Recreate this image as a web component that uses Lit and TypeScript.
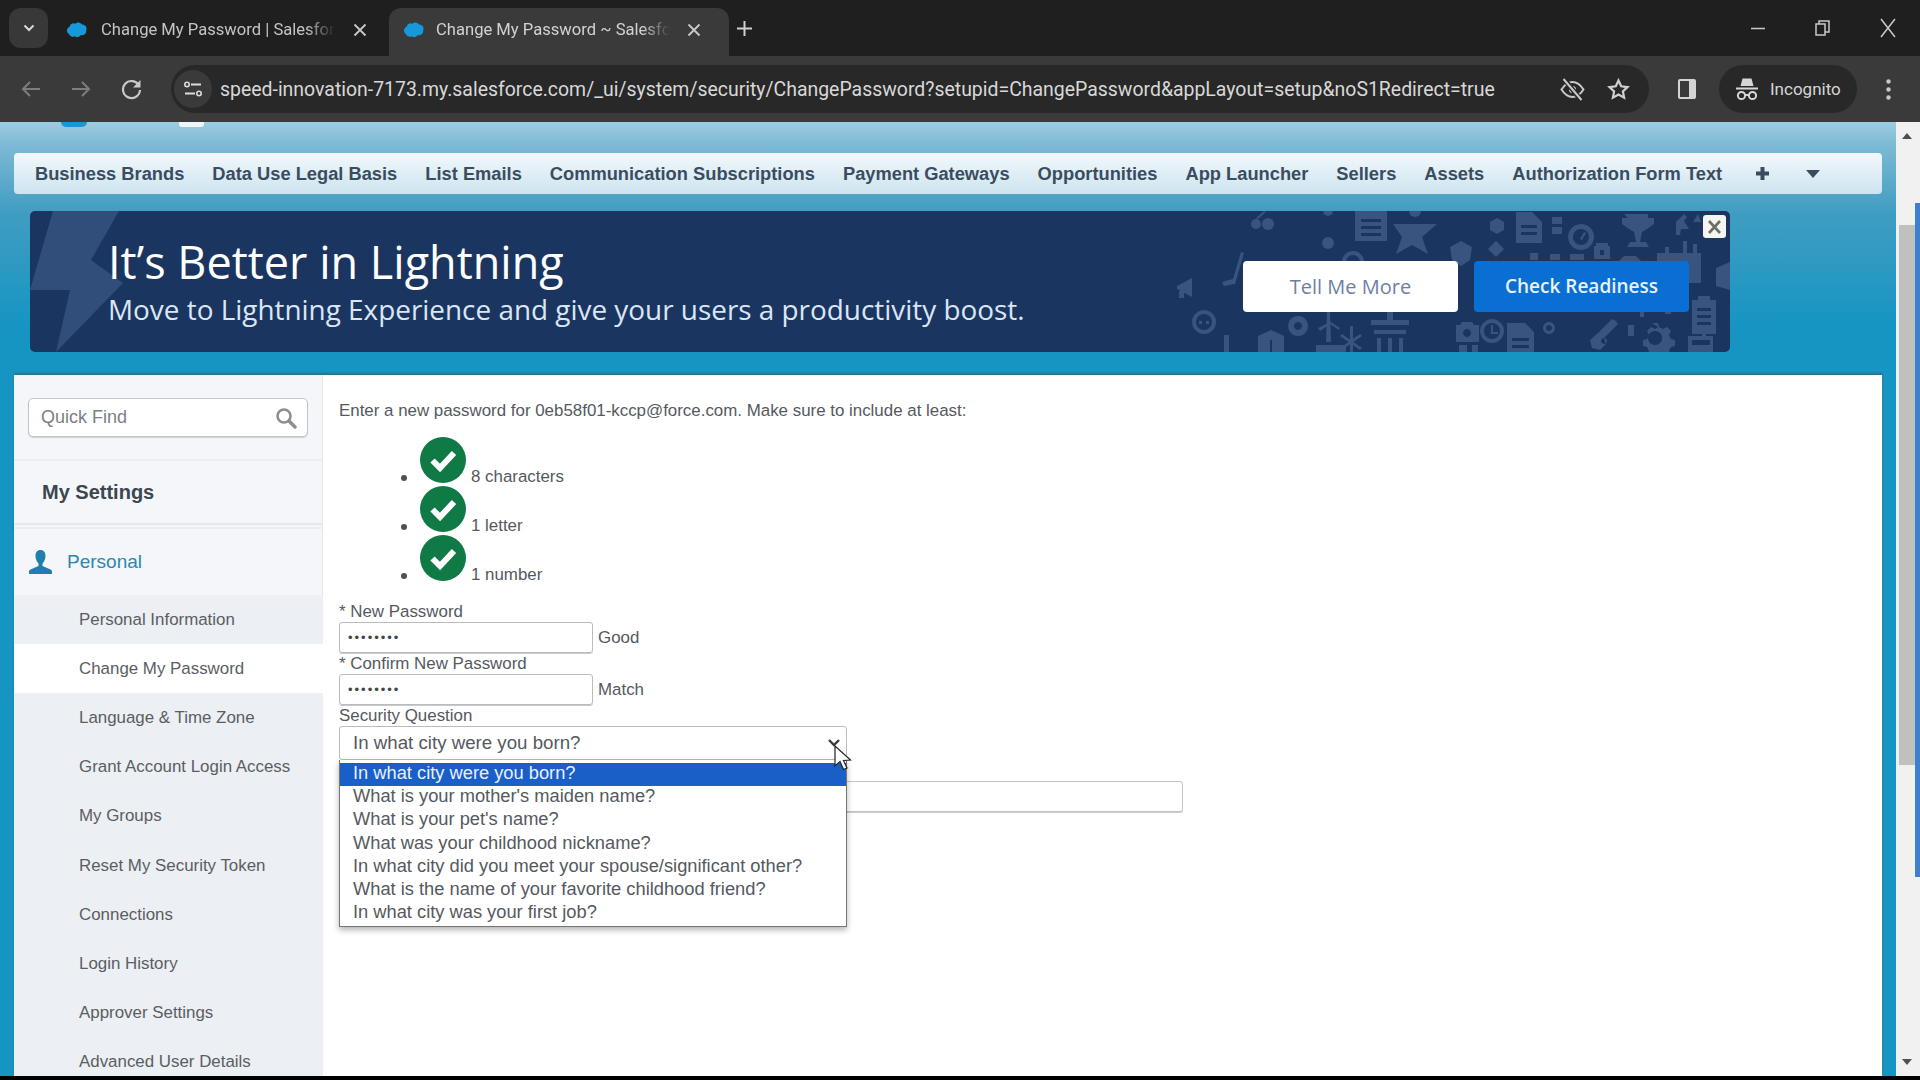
import { LitElement, html, css, svg } from 'lit';
import { customElement } from 'lit/decorators.js';

const navItems = [
  'Business Brands',
  'Data Use Legal Basis',
  'List Emails',
  'Communication Subscriptions',
  'Payment Gateways',
  'Opportunities',
  'App Launcher',
  'Sellers',
  'Assets',
  'Authorization Form Text',
];

const sideItems = [
  'Personal Information',
  'Change My Password',
  'Language & Time Zone',
  'Grant Account Login Access',
  'My Groups',
  'Reset My Security Token',
  'Connections',
  'Login History',
  'Approver Settings',
  'Advanced User Details',
];

const questions = [
  'In what city were you born?',
  "What is your mother's maiden name?",
  "What is your pet's name?",
  'What was your childhood nickname?',
  'In what city did you meet your spouse/significant other?',
  'What is the name of your favorite childhood friend?',
  'In what city was your first job?',
];

const rules = ['8 characters', '1 letter', '1 number'];

const cloud = html`<svg class="favicon" viewBox="0 0 24 20">
  <path fill="#1798d8" d="M10 2.500a5 5 0 0 1 8 1 5 5 0 0 1 5 7 5 5 0 0 1-6.500 5.500 4.500 4.500 0 0 1-7 1.500A5 5 0 0 1 2.500 15 5 5 0 0 1 3 6a5 5 0 0 1 7-3.500z" />
</svg>`;

// faint icon wallpaper on the right of the banner, drawn in page coordinates
const wallpaper = svg`
  <g fill="#3a5480" stroke="none">
    <circle cx="1256" cy="224" r="5" /><circle cx="1268" cy="224" r="6" /><path d="M1256 218l8-7 2 1-8 7z" />
    <path fill-rule="evenodd" d="M1355 211h32v30h-32zM1361 219v3h20v-3zM1361 226v3h20v-3zM1361 233v3h20v-3z" />
    <path d="M1393 224h44l-15 13 6 17-16-9-16 9 6-17z" />
    <circle cx="1328" cy="243" r="6" /><path d="M1342 262a11 11 0 0 1 22 0h-4a7 7 0 0 0-14 0z" />
    <circle cx="1328" cy="211" r="5" /><circle cx="1415" cy="211" r="6" />
    <path d="M1222 283l3-2 8-2 8-27 3 1-9 31-11 2z" />
    <path d="M1177 286l15-8v19l-15-8zM1179 291h5v7h-5z" />
    <path fill-rule="evenodd" d="M1204 310a12 12 0 1 0 .1 0zM1204 314a8 8 0 1 1-.1 0zM1199 321h3v3h-3zM1206 321h3v3h-3z" />
    <path fill-rule="evenodd" d="M1298 316a10 10 0 1 0 .1 0zM1298 322a4 4 0 1 1-.1 0z" />
    <path d="M1327 312h3l1 30h-5zM1318 328l10-5 1 2-9 6zM1331 322l9 6-1 2-9-6z" />
    <path d="M1350 326h3v26h-3zM1340 336l2-2 20 14-2 2zM1340 348l20-14 2 2-20 14z" />
    <path d="M1387 312h6v10h-6zM1371 320h38v5h-38zM1374 330h32v4h-32zM1377 338h4v14h-4zM1388 338h4v14h-4zM1399 338h4v14h-4z" />
    <path d="M1271 330l13 6v16h-26v-16zM1270 340v12h2v-12z" />
    <path d="M1224 335h5v17h-5z" />
    <path d="M1316 345h30v7h-30z" />
    <path fill-rule="evenodd" d="M1516 212h16l10 10v21h-26zM1521 225v3h16v-3zM1521 232v3h16v-3z" />
    <path fill-rule="evenodd" d="M1581 224a13 13 0 1 0 .1 0zM1581 229a8 8 0 1 1-.1 0z" />
    <path d="M1584 232l2 1-4 7-2-1z" />
    <path d="M1624 214h24v4h6v6l-7 5-5 3-2 10h6l3 5h-22l3-5h6l-2-10-5-3-7-5v-6h6z" />
    <path d="M1676 222l8-8 3 3-3 4 5 8h-8l-1 6h-4zM1693 222l5-8 3 8z" />
    <path fill-rule="evenodd" d="M1596 243h12v3h2v13h-16v-13h2zM1600 250v5h4v-5z" />
    <path d="M1461 241l11 6-2 13-9 6-9-6-2-13z" />
    <path d="M1496 241l8 8-8 8-8-8z" />
    <path d="M1497 218l7 4v8l-7 4-7-4v-8z" />
    <path d="M1552 217h10v7h-10zM1552 227h10v7h-10z" />
    <path d="M1530 253h8v7h-8zM1550 254h10v6h-10zM1570 254h14v6h-14z" />
    <path d="M1624 256h12l6 6h-24z" />
    <path d="M1657 253h8v-6h4v6h14v-12h4v12h6v-9h4v9h4v30h-44z" />
    <path d="M1716 268l14-6v28l-14-4z" />
    <path fill-rule="evenodd" d="M1692 300h6v-4h12v4h6v34h-24zM1697 308v3h14v-3zM1697 315v3h14v-3zM1697 322v3h14v-3z" />
    <path fill-rule="evenodd" d="M1456 325h4l2-3h10l2 3h5v17h-23zM1467 329a4 4 0 1 0 .1 0z" />
    <path d="M1459 345h8v7h-8zM1472 345h6v7h-6z" />
    <path fill-rule="evenodd" d="M1492 319a12 12 0 1 0 .1 0zM1492 323a8 8 0 1 1-.1 0zM1491 325h2v7h5v2h-7z" />
    <path fill-rule="evenodd" d="M1507 323h18l9 9v20h-27zM1512 338v3h17v-3zM1512 345v3h17v-3z" />
    <path fill-rule="evenodd" d="M1549 322a6 6 0 1 0 .1 0zM1549 325a3 3 0 1 1-.1 0z" />
    <path fill-rule="evenodd" d="M1598 333l14-14 4 2 2 3-14 14 2 6-6 6-8-2-2-8zM1604 338a3 3 0 1 0 .1 0z" />
    <path d="M1628 325h6v11h-6z" />
    <path fill-rule="evenodd" d="M1652 323h6l1 4 4 2 4-2 4 4-2 4 2 4 4 1v6l-4 1-2 4 2 3h-24l2-3-2-4-4-1v-6l4-1 2-4-2-4 4-4 4 2 3-2zM1655 331a7 7 0 1 0 .1 0z" />
    <path fill-rule="evenodd" d="M1688 336h14v-3h4v3h7v16h-25zM1692 340v5h18v-5z" />
    <path d="M1665 309h6v5h-6zM1640 312h4v5h-4z" />
  </g>
`;

@customElement('app-root')
export class AppRoot extends LitElement {
  static styles = css`
    :host {
      display: block;
      width: 1920px;
      height: 1080px;
      overflow: hidden;
      background: #000;
      font-family: 'Liberation Sans', Arial, sans-serif;
      color: #55595e;
    }

    /* browser chrome */
    .tabstrip {
      height: 56px;
      display: flex;
      background: #1f1f1f;
      color: #c4c4c4;
      font-family: Roboto, 'Liberation Sans', sans-serif;
      font-size: 16.600px;
    }
    .tab-menu {
      width: 39px;
      height: 40px;
      margin: 8px 0 0 9px;
      border-radius: 12px;
      background: #383838;
      display: flex;
      align-items: center;
      justify-content: center;
    }
    .tab {
      width: 340px;
      height: 48px;
      margin-top: 8px;
      box-sizing: border-box;
      padding-bottom: 5px;
      display: flex;
      align-items: center;
      border-radius: 12px 12px 0 0;
    }
    .tab.first {
      margin-left: 1px;
      padding-left: 18px;
    }
    .tab.active {
      background: #3a3a3a;
      padding-left: 15px;
      color: #d2d2d2;
    }
    .favicon {
      width: 20px;
      height: 18px;
      flex: none;
    }
    .tab-title {
      width: 234px;
      margin-left: 14px;
      white-space: nowrap;
      -webkit-mask-image: linear-gradient(90deg, #000 88%, transparent);
      mask-image: linear-gradient(90deg, #000 88%, transparent);
    }
    .tab.active .tab-title {
      margin-left: 12px;
    }
    .tab-close {
      margin-left: 17px;
      width: 16px;
      height: 16px;
    }
    .tab.active .tab-close {
      margin-left: 16px;
    }
    .new-tab {
      width: 30px;
      height: 40px;
      margin-top: 8px;
      display: flex;
      align-items: center;
      justify-content: center;
    }
    .window-controls {
      margin-left: auto;
      display: flex;
    }
    .window-controls span {
      width: 65px;
      height: 56px;
      display: flex;
      align-items: center;
      justify-content: center;
    }
    .toolbar {
      height: 66px;
      box-sizing: border-box;
      padding-left: 6px;
      display: flex;
      align-items: center;
      background: #3a3a3a;
      color: #c9c9c9;
      font-family: Roboto, 'Liberation Sans', sans-serif;
    }
    .tool {
      width: 50px;
      height: 48px;
      display: flex;
      align-items: center;
      justify-content: center;
      flex: none;
    }
    .address {
      width: 1478px;
      height: 48px;
      margin-left: 15px;
      box-sizing: border-box;
      border-radius: 24px;
      background: #282828;
      display: flex;
      align-items: center;
      padding-left: 3px;
      flex: none;
    }
    .site-info {
      width: 38px;
      height: 38px;
      border-radius: 50%;
      background: #3a3a3a;
      display: flex;
      align-items: center;
      justify-content: center;
      flex: none;
    }
    .url {
      margin-left: 8px;
      flex: 1;
      font-size: 19.450px;
      color: #d8d8d8;
      white-space: nowrap;
    }
    .addr-icon {
      width: 46px;
      height: 48px;
      display: flex;
      align-items: center;
      justify-content: center;
    }
    .address .addr-icon:last-child {
      margin-right: 8px;
    }
    .side-panel {
      margin-left: 13px;
    }
    .incognito {
      width: 138px;
      height: 48px;
      margin-left: 7px;
      border-radius: 24px;
      background: #282828;
      display: flex;
      align-items: center;
      box-sizing: border-box;
      padding-left: 16px;
      gap: 11px;
      font-size: 17px;
      color: #d6d6d6;
      flex: none;
    }
    .kebab {
      width: 63px;
    }

    /* salesforce page */
    .page {
      height: 954px;
      display: flex;
    }
    .content {
      width: 1896px;
      box-sizing: border-box;
      background: linear-gradient(#9ccce1 0, #7cb9d5 24px, #3f9cc1 92px, #3a9cc2 110px, #1795c2 200px);
    }
    .logo-peek {
      height: 6px;
      position: relative;
    }
    .logo-peek i {
      position: absolute;
      top: 0;
    }
    .peek-cloud {
      left: 61px;
      width: 26px;
      height: 5px;
      border-radius: 0 0 13px 13px;
      background: #1798d0;
    }
    .peek-white {
      left: 179px;
      width: 25px;
      height: 5px;
      border-radius: 0 0 3px 3px;
      background: #eef5f8;
    }
    .nav {
      height: 41px;
      margin: 25px 14px 0;
      box-sizing: border-box;
      padding-left: 21px;
      display: flex;
      align-items: center;
      gap: 28px;
      border-radius: 4px;
      background: linear-gradient(#f2f8fb, #cde4f0);
      font-size: 18.300px;
      font-weight: 700;
      color: #3a4d60;
      white-space: nowrap;
    }
    .nav-plus {
      margin-left: 5px;
      width: 15px;
      height: 15px;
    }
    .nav-caret {
      margin-left: 8px;
      width: 14px;
      height: 8px;
    }
    .banner {
      position: relative;
      height: 141px;
      width: 1700px;
      margin: 17px 0 0 30px;
      box-sizing: border-box;
      border-radius: 5px;
      overflow: hidden;
      background: #1a3560;
      display: flex;
      align-items: flex-start;
      color: #fff;
      font-family: 'Open Sans', sans-serif;
    }
    .bolt {
      position: absolute;
      left: 0;
      top: 0;
      width: 100px;
      height: 141px;
    }
    .wallpaper {
      position: absolute;
      right: 0;
      top: 0;
      width: 600px;
      height: 141px;
      filter: blur(0.6px);
    }
    .banner-copy {
      position: relative;
      margin-left: 78px;
      padding-top: 22px;
      flex: 1;
    }
    .banner-title {
      font-size: 45px;
      line-height: 58px;
      font-weight: 400;
    }
    .banner-sub {
      font-size: 27.900px;
      line-height: 36px;
      color: #dbe6f4;
    }
    .banner-actions {
      position: relative;
      display: flex;
      gap: 16px;
      margin: 50px 41px 0 0;
    }
    .banner-btn {
      width: 215px;
      height: 51px;
      box-sizing: border-box;
      padding-bottom: 1px;
      border-radius: 4px;
      display: flex;
      align-items: center;
      justify-content: center;
      font-size: 20px;
    }
    .banner-btn.light {
      background: #fff;
      color: #6d7fa3;
    }
    .banner-btn.primary {
      background: #0a6fd3;
      color: #e8f2ff;
      font-size: 19px;
      font-weight: 600;
    }
    .banner-close {
      position: absolute;
      right: 4px;
      top: 4px;
      width: 23px;
      height: 23px;
      border-radius: 3px;
      background: #f4f4f0;
      display: flex;
      align-items: center;
      justify-content: center;
    }
    .panel {
      height: 701px;
      margin: 23px 14px 0;
      display: flex;
      overflow: hidden;
      background: #fff;
      box-shadow: 0 -2px 2px rgba(60, 70, 80, 0.45);
    }

    /* left tree */
    .sidebar {
      width: 309px;
      flex: none;
      background: #f4f6f9;
      box-shadow: inset -1px 0 0 #e6e8eb;
    }
    .quick-find {
      height: 39px;
      margin: 23px 15px 0 14px;
      box-sizing: border-box;
      padding: 0 10px 0 12px;
      border: 1px solid #c3c6ca;
      border-radius: 5px;
      box-shadow: 0 1px 1px #d0d2d5;
      background: #fff;
      display: flex;
      align-items: center;
      justify-content: space-between;
      font-size: 18px;
      color: #7b7f84;
    }
    .side-title {
      margin-top: 22px;
      height: 66px;
      box-sizing: border-box;
      padding-left: 28px;
      border-top: 2px solid #ebedf0;
      border-bottom: 2px solid #e6e8eb;
      display: flex;
      align-items: center;
      font-size: 20px;
      font-weight: 700;
      color: #3c4650;
    }
    .side-group {
      height: 68px;
      box-sizing: border-box;
      border-top: 2px solid #ebedf0;
      margin-top: 2px;
      padding: 0 0 0 15px;
      display: flex;
      align-items: center;
      gap: 15px;
      font-size: 19px;
      color: #2e87ae;
    }
    .side-group svg {
      width: 23px;
      height: 24px;
    }
    .side-item {
      height: 49.200px;
      display: flex;
      align-items: center;
      padding-left: 65px;
      background: #eceff3;
      font-size: 16.900px;
      color: #5a5e63;
      white-space: nowrap;
    }
    .side-item.current {
      background: #fff;
    }

    /* password form */
    .form {
      flex: 1;
      padding: 27px 0 0 16px;
      position: relative;
      font-size: 16.900px;
      line-height: 18px;
    }
    .intro {
      white-space: nowrap;
    }
    .rules {
      margin-top: 17px;
    }
    .rule {
      height: 49px;
      display: flex;
      align-items: flex-end;
      padding-left: 62px;
    }
    .rule-dot {
      width: 6px;
      height: 6px;
      margin: 0 16px 5px 0;
      border-radius: 50%;
      background: #4d5156;
      flex: none;
    }
    .rule-check {
      width: 46px;
      height: 46px;
      margin: 0 5px 3px -3px;
      align-self: flex-start;
      flex: none;
    }
    .field-label {
      margin-top: 2px;
    }
    .field-label.top {
      margin-top: 19px;
    }
    .field-row {
      margin-top: 1px;
      display: flex;
      align-items: center;
      gap: 5px;
    }
    .text-box {
      width: 254px;
      height: 31px;
      box-sizing: border-box;
      padding-left: 8px;
      border: 1px solid #b8bbbf;
      border-radius: 3px;
      box-shadow: 0 1px 0 #c8cacc;
      display: flex;
      align-items: center;
      font-size: 13px;
      letter-spacing: 2px;
      color: #444;
    }
    .select {
      width: 508px;
      height: 34px;
      margin-top: 1px;
      box-sizing: border-box;
      padding: 0 6px 0 13px;
      border: 1px solid #b8bbbf;
      border-radius: 3px;
      display: flex;
      align-items: center;
      justify-content: space-between;
      font-size: 18.700px;
    }
    .answer {
      width: 844px;
      height: 31px;
      margin-top: 21px;
      box-sizing: border-box;
      border: 1px solid #c2c4c7;
      border-radius: 3px;
      box-shadow: 0 1px 0 #c8cacc;
    }
    .options {
      position: absolute;
      left: 16px;
      top: 385px;
      width: 508px;
      height: 167px;
      box-sizing: border-box;
      padding-top: 3px;
      background: #fff;
      border: 1px solid #767676;
      border-top: none;
      box-shadow: 0 3px 6px rgba(0, 0, 0, 0.3);
      font-size: 18.300px;
    }
    .option {
      height: 23.300px;
      box-sizing: border-box;
      padding: 0 0 4px 13px;
      display: flex;
      align-items: center;
      white-space: nowrap;
    }
    .option.selected {
      background: #1a5fc8;
      color: #e8f1ff;
    }
    .cursor {
      position: absolute;
      left: 511px;
      top: 370px;
      width: 18px;
      height: 27px;
    }

    /* page scrollbar */
    .scrollbar {
      position: relative;
      width: 24px;
      flex: none;
      box-sizing: border-box;
      padding-left: 3px;
      display: flex;
      align-items: flex-start;
      background: #f1f1f1;
    }
    .thumb {
      width: 16px;
      height: 540px;
      margin-top: 103px;
      background: #c1c0c1;
    }
    .stripe {
      width: 5px;
      height: 674px;
      margin-top: 81px;
      background: #3f7fd0;
    }
    .arrow {
      position: absolute;
      left: 6px;
      width: 10px;
      height: 6px;
    }
    .arrow.up {
      top: 11px;
    }
    .arrow.down {
      bottom: 11px;
    }
  `;

  render() {
    return html`
      ${this.renderTabs()} ${this.renderToolbar()}
      <div class="page">
        <div class="content">
          <div class="logo-peek"><i class="peek-cloud"></i><i class="peek-white"></i></div>
          ${this.renderNav()} ${this.renderBanner()}
          <div class="panel">${this.renderSidebar()} ${this.renderForm()}</div>
        </div>
        <div class="scrollbar">
          <div class="thumb"></div>
          <div class="stripe"></div>
          <svg class="arrow up" viewBox="0 0 10 6"><path fill="#505050" d="M5 0l5 6H0z" /></svg>
          <svg class="arrow down" viewBox="0 0 10 6"><path fill="#505050" d="M0 0h10L5 6z" /></svg>
        </div>
      </div>
    `;
  }

  private renderTabs() {
    const close = html`<svg class="tab-close" viewBox="0 0 16 16">
      <path stroke="#c9c9c9" stroke-width="1.800" d="M2.500 2.500l11 11M13.500 2.500l-11 11" />
    </svg>`;
    return html`
      <div class="tabstrip">
        <div class="tab-menu">
          <svg width="12" height="8" viewBox="0 0 12 8">
            <path fill="none" stroke="#d8d8d8" stroke-width="2" d="M1.500 1.500L6 6l4.500-4.500" />
          </svg>
        </div>
        <div class="tab first">
          ${cloud}<span class="tab-title">Change My Password | Salesfor</span>${close}
        </div>
        <div class="tab active">
          ${cloud}<span class="tab-title">Change My Password ~ Salesfo</span>${close}
        </div>
        <div class="new-tab">
          <svg width="17" height="17" viewBox="0 0 17 17">
            <path stroke="#d0d0d0" stroke-width="2" d="M8.500 1v15M1 8.500h15" />
          </svg>
        </div>
        <div class="window-controls">
          <span><svg width="14" height="3" viewBox="0 0 14 3"><path stroke="#c9c9c9" stroke-width="1.500" d="M0 1.500h14" /></svg></span>
          <span><svg width="15" height="16" viewBox="0 0 15 16"><path fill="none" stroke="#c9c9c9" stroke-width="1.500" d="M1 4h9v11H1zM4 4V1h10v11h-4" /></svg></span>
          <span><svg width="16" height="20" viewBox="0 0 16 20"><path stroke="#c9c9c9" stroke-width="1.500" d="M1 1l14 18M15 1L1 19" /></svg></span>
        </div>
      </div>
    `;
  }

  private renderToolbar() {
    return html`
      <div class="toolbar">
        <span class="tool">
          <svg width="20" height="18" viewBox="0 0 20 18"><path fill="none" stroke="#7d7d7d" stroke-width="2" d="M19 9H2M9 2L2 9l7 7" /></svg>
        </span>
        <span class="tool">
          <svg width="20" height="18" viewBox="0 0 20 18"><path fill="none" stroke="#7d7d7d" stroke-width="2" d="M1 9h17M11 2l7 7-7 7" /></svg>
        </span>
        <span class="tool">
          <svg width="21" height="21" viewBox="0 0 21 21"><path fill="none" stroke="#c9c9c9" stroke-width="2.200" d="M18 6.500A8.500 8.500 0 1 0 19 11" /><path fill="#c9c9c9" d="M19.500 1v7.500H12z" /></svg>
        </span>
        <div class="address">
          <span class="site-info">
            <svg width="18" height="18" viewBox="0 0 18 18">
              <path stroke="#dcdcdc" stroke-width="2" d="M7 4.500h10M1 13.500h10" />
              <circle cx="3" cy="4.500" r="2.200" fill="none" stroke="#dcdcdc" stroke-width="1.600" />
              <circle cx="15" cy="13.500" r="2.200" fill="none" stroke="#dcdcdc" stroke-width="1.600" />
            </svg>
          </span>
          <span class="url">speed-innovation-7173.my.salesforce.com/_ui/system/security/ChangePassword?setupid=ChangePassword&amp;appLayout=setup&amp;noS1Redirect=true</span>
          <span class="addr-icon">
            <svg width="25" height="23" viewBox="0 0 25 23">
              <path fill="none" stroke="#c9c9c9" stroke-width="2" d="M1.500 11.500C5 6 9 4 12.500 4s7.500 2 11 7.500c-3.500 5.500-7.500 7.500-11 7.500s-7.500-2-11-7.500z" />
              <circle cx="12.500" cy="11.500" r="3.500" fill="#c9c9c9" />
              <path stroke="#282828" stroke-width="5" d="M4 1l17 21" />
              <path stroke="#c9c9c9" stroke-width="2" d="M3.500 1l18 21" />
            </svg>
          </span>
          <span class="addr-icon">
            <svg width="23" height="22" viewBox="0 0 23 22">
              <path fill="none" stroke="#d0d0d0" stroke-width="2.200" d="M11.500 2.500l2.700 5.800 6.300.8-4.600 4.300 1.200 6.200-5.600-3.100-5.600 3.100 1.200-6.200-4.600-4.300 6.300-.8z" />
            </svg>
          </span>
        </div>
        <span class="tool side-panel">
          <svg width="20" height="22" viewBox="0 0 20 22">
            <rect x="1" y="1" width="18" height="20" rx="2" fill="#d4d4d4" />
            <rect x="3" y="3" width="9" height="16" fill="#3a3a3a" />
          </svg>
        </span>
        <div class="incognito">
          <svg width="24" height="24" viewBox="0 0 24 24">
            <path fill="#d6d6d6" d="M7.500 1.500h9l2 7.500H5.500zM1 10.500h22v2H1z" />
            <circle cx="6.500" cy="18.500" r="3.600" fill="none" stroke="#d6d6d6" stroke-width="2" />
            <circle cx="17.500" cy="18.500" r="3.600" fill="none" stroke="#d6d6d6" stroke-width="2" />
            <path stroke="#d6d6d6" stroke-width="2" d="M10 18h4" />
          </svg>
          <span>Incognito</span>
        </div>
        <span class="tool kebab">
          <svg width="5" height="21" viewBox="0 0 5 21">
            <circle cx="2.500" cy="2.500" r="2.200" fill="#c9c9c9" />
            <circle cx="2.500" cy="10.500" r="2.200" fill="#c9c9c9" />
            <circle cx="2.500" cy="18.500" r="2.200" fill="#c9c9c9" />
          </svg>
        </span>
      </div>
    `;
  }

  private renderNav() {
    return html`
      <nav class="nav">
        ${navItems.map((item) => html`<span>${item}</span>`)}
        <svg class="nav-plus" viewBox="0 0 15 15"><path stroke="#3a4d60" stroke-width="4" d="M7.500 1v13M1 7.500h13" /></svg>
        <svg class="nav-caret" viewBox="0 0 14 8"><path fill="#3a4d60" d="M0 0h14L7 8z" /></svg>
      </nav>
    `;
  }

  private renderBanner() {
    return html`
      <section class="banner">
        <svg class="bolt" viewBox="0 0 100 141">
          <path fill="#314d7a" d="M23 0h66L61 49l32 23L26 141l14-62H0z" />
        </svg>
        <svg class="wallpaper" viewBox="1130 211 600 141">${wallpaper}</svg>
        <div class="banner-copy">
          <div class="banner-title">It’s Better in Lightning</div>
          <div class="banner-sub">Move to Lightning Experience and give your users a productivity boost.</div>
        </div>
        <div class="banner-actions">
          <div class="banner-btn light">Tell Me More</div>
          <div class="banner-btn primary">Check Readiness</div>
        </div>
        <div class="banner-close">
          <svg width="13" height="14" viewBox="0 0 13 14"><path stroke="#6e6e66" stroke-width="2.600" d="M1 1l11 12M12 1L1 13" /></svg>
        </div>
      </section>
    `;
  }

  private renderSidebar() {
    return html`
      <aside class="sidebar">
        <div class="quick-find">
          <span>Quick Find</span>
          <svg width="22" height="22" viewBox="0 0 22 22">
            <circle cx="9" cy="9" r="6.500" fill="none" stroke="#8b8f94" stroke-width="2.600" />
            <path stroke="#8b8f94" stroke-width="3.400" stroke-linecap="round" d="M14 14l6 6" />
          </svg>
        </div>
        <div class="side-title">My Settings</div>
        <div class="side-group">
          <svg viewBox="0 0 23 24">
            <path fill="#1f7eaa" d="M11.500 0c3.400 0 5 2.600 5 6s-1.700 6-3 7.500V16l8 3.500c1 .5 1.500 1.500 1.500 2.500v2H0v-2c0-1 .5-2 1.500-2.500l8-3.500v-2.500c-1.300-1.500-3-4.100-3-7.500s1.600-6 5-6z" />
          </svg>
          <span>Personal</span>
        </div>
        ${sideItems.map(
          (item, i) => html`<div class="side-item ${i === 1 ? 'current' : ''}">${item}</div>`
        )}
      </aside>
    `;
  }

  private renderForm() {
    return html`
      <main class="form">
        <div class="intro">Enter a new password for 0eb58f01-kccp@force.com. Make sure to include at least:</div>
        <div class="rules">
          ${rules.map(
            (rule) => html`
              <div class="rule">
                <span class="rule-dot"></span>
                <svg class="rule-check" viewBox="0 0 46 46">
                  <circle cx="23" cy="23" r="23" fill="#0f7a45" />
                  <path fill="none" stroke="#fff" stroke-width="6" d="M12.500 23.500l7.500 7.500 14-15" />
                </svg>
                <span>${rule}</span>
              </div>
            `
          )}
        </div>
        <div class="field-label top">* New Password</div>
        <div class="field-row"><div class="text-box">••••••••</div><span>Good</span></div>
        <div class="field-label">* Confirm New Password</div>
        <div class="field-row"><div class="text-box">••••••••</div><span>Match</span></div>
        <div class="field-label">Security Question</div>
        <div class="select">
          <span>${questions[0]}</span>
          <svg width="12" height="8" viewBox="0 0 12 8"><path fill="none" stroke="#3a3a3a" stroke-width="2.400" d="M1 1l5 5 5-5" /></svg>
        </div>
        <div class="answer"></div>
        <div class="options">
          ${questions.map(
            (q, i) => html`<div class="option ${i === 0 ? 'selected' : ''}">${q}</div>`
          )}
        </div>
        <svg class="cursor" viewBox="0 0 18 27">
          <path fill="#fff" stroke="#222" stroke-width="1.200" d="M1 1v20l5-4.500 3.500 8 3.500-1.500-3.500-7.500 7-.5z" />
        </svg>
      </main>
    `;
  }
}
